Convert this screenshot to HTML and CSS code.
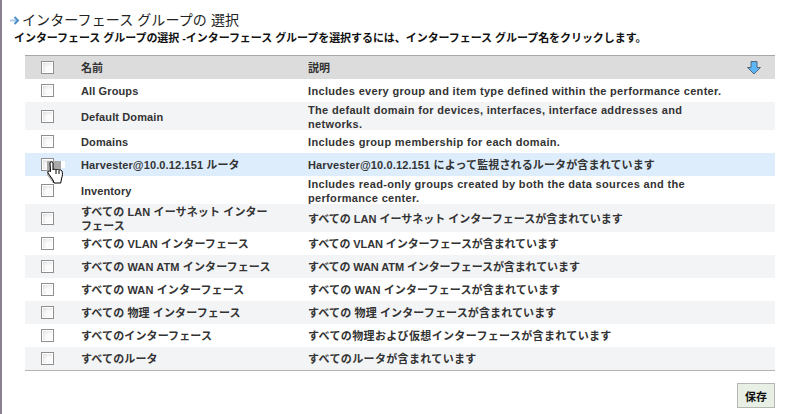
FILE: index.html
```html
<!DOCTYPE html>
<html lang="ja">
<head>
<meta charset="utf-8">
<title>インターフェース グループの 選択</title>
<link rel="stylesheet" href="styles.css">
</head>
<body>
<main class="page">
  <h1 class="title">
    <svg class="title-arrow" width="10" height="9" viewBox="0 0 10 9"><path d="M0 4.500h7.500" fill="none" stroke="#a9cdea" stroke-width="2"/><path d="M4.500 1l3.500 3.500L4.500 8" fill="none" stroke="#4f8fcb" stroke-width="2"/></svg>
    <span>インターフェース グループの 選択</span>
  </h1>
  <p class="intro">インターフェース グループの選択 -インターフェース グループを選択するには、インターフェース グループ名をクリックします。</p>
  <div class="table">
    <div class="row head">
      <div class="cell-check"><span class="box"></span></div>
      <div class="cell-name">名前</div>
      <div class="cell-desc">説明</div>
      <div class="cell-sort">
        <svg width="14" height="14" viewBox="0 0 14 14"><path d="M4 .5h6v6h3.500L7 13 .5 6.500H4z" fill="#5cb6f5" stroke="#56697a"/></svg>
      </div>
    </div>
    <div class="row"><div class="cell-check"><span class="box"></span></div><div class="cell-name">All Groups</div><div class="cell-desc latin">Includes every group and item type defined within the performance center.</div></div>
    <div class="row alt tall"><div class="cell-check"><span class="box"></span></div><div class="cell-name">Default Domain</div><div class="cell-desc latin">The default domain for devices, interfaces, interface addresses and networks.</div></div>
    <div class="row"><div class="cell-check"><span class="box"></span></div><div class="cell-name">Domains</div><div class="cell-desc latin">Includes group membership for each domain.</div></div>
    <div class="row hover"><div class="cell-check"><span class="box"></span>
      <svg class="cursor" width="20" height="25" viewBox="0 0 20 25"><path d="M0 1h14v7h4V1h-4v7l-1 15H6L0 15z" fill="#a9a9a9"/><path d="M14 1h4v7h-4z" fill="#fff"/><path d="M3 3c0-1.500 3-1.500 3 0v7c.5-1 2.500-1 3 0 .5-.8 2.500-.8 3 .3.5-.6 2.500-.5 3 .7.7 2 .5 5-.3 7l-1 5H7l-1-3-5-7c-.8-1.500 1-2.800 2.500-1.500z" fill="#fff" stroke="#000"/><path d="M9 10v4M12 10.500V14" stroke="#000" fill="none"/></svg>
    </div><div class="cell-name">Harvester@10.0.12.151 ルータ</div><div class="cell-desc slight">Harvester@10.0.12.151 によって監視されるルータが含まれています</div></div>
    <div class="row tall"><div class="cell-check"><span class="box"></span></div><div class="cell-name">Inventory</div><div class="cell-desc latin">Includes read-only groups created by both the data sources and the performance center.</div></div>
    <div class="row alt tall"><div class="cell-check"><span class="box"></span></div><div class="cell-name">すべての LAN イーサネット インターフェース</div><div class="cell-desc">すべての LAN イーサネット インターフェースが含まれています</div></div>
    <div class="row"><div class="cell-check"><span class="box"></span></div><div class="cell-name">すべての VLAN インターフェース</div><div class="cell-desc tight">すべての VLAN インターフェースが含まれています</div></div>
    <div class="row alt"><div class="cell-check"><span class="box"></span></div><div class="cell-name">すべての WAN ATM インターフェース</div><div class="cell-desc tight">すべての WAN ATM インターフェースが含まれています</div></div>
    <div class="row"><div class="cell-check"><span class="box"></span></div><div class="cell-name">すべての WAN インターフェース</div><div class="cell-desc slight">すべての WAN インターフェースが含まれています</div></div>
    <div class="row alt"><div class="cell-check"><span class="box"></span></div><div class="cell-name">すべての 物理 インターフェース</div><div class="cell-desc slight">すべての 物理 インターフェースが含まれています</div></div>
    <div class="row"><div class="cell-check"><span class="box"></span></div><div class="cell-name">すべてのインターフェース</div><div class="cell-desc loose">すべての物理および仮想インターフェースが含まれています</div></div>
    <div class="row alt"><div class="cell-check"><span class="box"></span></div><div class="cell-name">すべてのルータ</div><div class="cell-desc loose">すべてのルータが含まれています</div></div>
  </div>
  <div class="actions"><button class="save" type="button">保存</button></div>
</main>
</body>
</html>
```

FILE: styles.css
```css
html, body {
  margin: 0;
  height: 100%;
}
body {
  background: #fff;
  color: #333;
  font: bold 11px/14px "Liberation Sans", "Noto Sans CJK JP", sans-serif;
  overflow: hidden;
}
.page {
  box-sizing: border-box;
  height: 414px;
  border-left: 2px solid #8a7f8e;
  padding: 10px 13px 0 8px;
  display: flex;
  flex-direction: column;
}
.title {
  margin: 0;
  display: flex;
  align-items: center;
  gap: 2px;
  font: normal 14px/20px "Liberation Sans", "Noto Sans CJK JP", sans-serif;
  letter-spacing: .1px;
  color: #222;
}
.intro {
  margin: 1px 0 0 4px;
  height: 24px;
  line-height: 14px;
  color: #111;
  font-size: 11px;
  letter-spacing: -.06px;
  white-space: nowrap;
}
.table {
  margin-left: 15px;
  border-top: 1px solid #a8a8a8;
  border-bottom: 1px solid #b4b4b4;
}
.row {
  display: flex;
  align-items: center;
  height: 23px;
}
.row.tall { height: 28px; }
.head { background: #dcdcdc; }
.alt { background: #f3f4f6; }
.hover { background: #ddedfb; }
.cell-check {
  position: relative;
  width: 56px;
  display: flex;
  padding-left: 16px;
  box-sizing: border-box;
  flex: none;
}
.box {
  width: 11px;
  height: 11px;
  border: 1px solid #8f8f8f;
  background: radial-gradient(circle at 65% 65%, #fbfbfb 30%, #d6d6d6 100%);
  box-shadow: inset 0 0 0 1px #fff;
}
.cursor {
  position: absolute;
  left: 22px;
  top: 2px;
}
.cell-name {
  width: 227px;
  padding: 1px 32px 0 0;
  box-sizing: border-box;
  flex: none;
  line-height: 14px;
  letter-spacing: .12px;
}
.cell-desc {
  flex: 1;
  padding: 1px 50px 0 0;
  line-height: 14px;
}
.head .cell-desc { padding-right: 0; }
.cell-desc.latin { letter-spacing: .33px; }
.cell-desc.slight { letter-spacing: .13px; }
.cell-desc.loose { letter-spacing: .35px; }
.cell-desc.tight { letter-spacing: -.1px; }
.cell-sort {
  width: 28px;
  flex: none;
  display: flex;
}
.actions {
  display: flex;
  justify-content: flex-end;
  margin-top: 12px;
}
.save {
  width: 38px;
  height: 25px;
  padding: 0;
  background: #e8efe4;
  border: 1px solid #b5b8b2;
  font: bold 11px "Liberation Sans", "Noto Sans CJK JP", sans-serif;
  color: #111;
}
```
